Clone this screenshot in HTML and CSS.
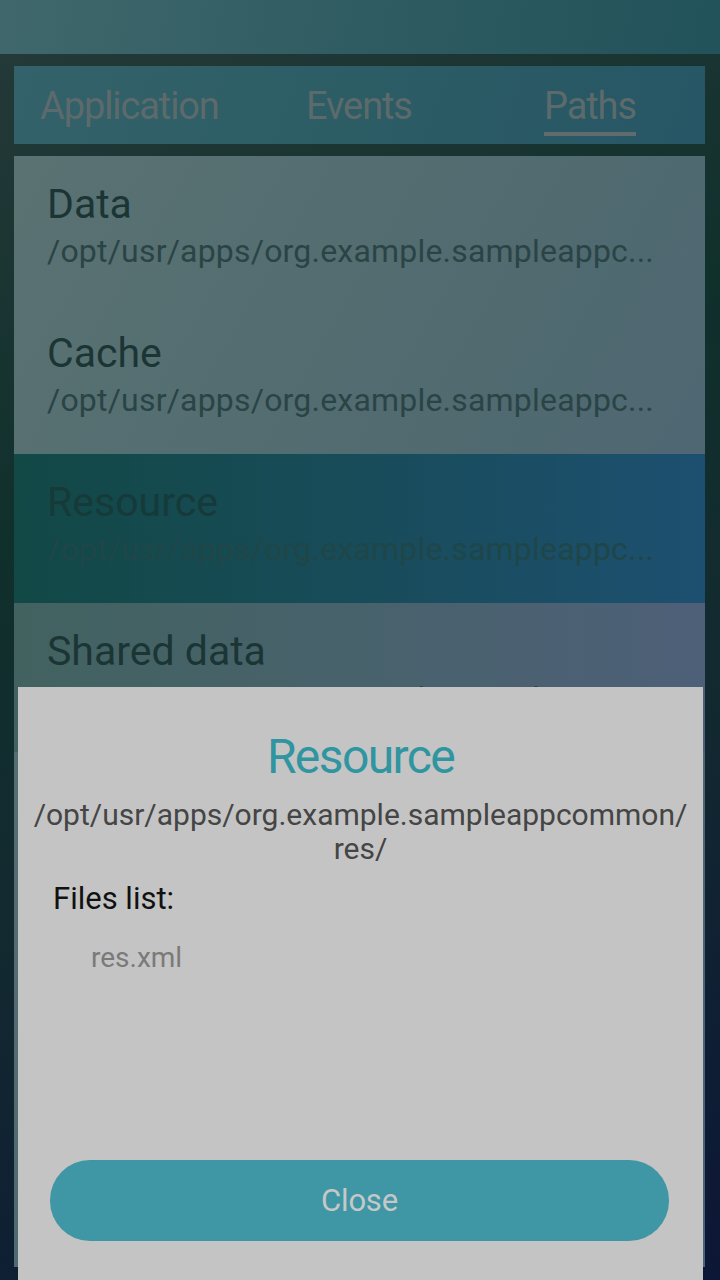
FILE: index.html
```html
<!DOCTYPE html>
<html>
<head>
<meta charset="utf-8">
<link rel="stylesheet" href="styles.css">
</head>
<body>
<div class="screen">
  <header class="topbar"></header>
  <main class="main">
    <nav class="tabs">
      <span class="tab">Application</span>
      <span class="tab">Events</span>
      <span class="tab active">Paths</span>
    </nav>
    <section class="list">
      <div class="row">
        <div class="row-title">Data</div>
        <div class="row-sub">/opt/usr/apps/org.example.sampleappc...</div>
      </div>
      <div class="row">
        <div class="row-title">Cache</div>
        <div class="row-sub">/opt/usr/apps/org.example.sampleappc...</div>
      </div>
      <div class="row selected">
        <div class="row-title">Resource</div>
        <div class="row-sub">/opt/usr/apps/org.example.sampleappc...</div>
      </div>
      <div class="row">
        <div class="row-title">Shared data</div>
        <div class="row-sub">/opt/usr/apps/org.example.sampleappc...</div>
      </div>
    </section>
  </main>
  <div class="popup">
    <h1 class="popup-title">Resource</h1>
    <p class="popup-path">/opt/usr/apps/org.example.sampleappcommon/<br>res/</p>
    <div class="files-label">Files list:</div>
    <ul class="files">
      <li>res.xml</li>
    </ul>
    <div class="spacer"></div>
    <button class="close-btn">Close</button>
  </div>
</div>
</body>
</html>
```
FILE: styles.css
```css
* { box-sizing: border-box; }
html, body { margin: 0; padding: 0; }
body {
  width: 720px;
  height: 1280px;
  overflow: hidden;
  font-family: Roboto, "Noto Sans", sans-serif;
}
.screen {
  position: relative;
  width: 720px;
  height: 1280px;
  display: flex;
  flex-direction: column;
  background: linear-gradient(160deg, #263a3a 0%, #10302c 35%, #132a30 60%, #0c1636 100%);
}
.topbar {
  height: 54px;
  flex: none;
  background: linear-gradient(100deg, #40686c 0%, #2f5c62 50%, #22525a 100%);
}
.main {
  flex: 1;
  display: flex;
  flex-direction: column;
  gap: 12px;
  padding: 12px 15px 13px 14px;
}
.tabs {
  height: 78px;
  flex: none;
  display: flex;
  align-items: flex-start;
  background: linear-gradient(110deg, #33626a 0%, #2c5c64 50%, #275666 100%);
  padding-left: 26px;
}
.tab {
  font-size: 38px;
  letter-spacing: -1.1px;
  color: #5d6a6b;
  line-height: 1;
  padding-top: 21px;
  padding-bottom: 7px;
  border-bottom: 4px solid transparent;
}
.tab:nth-child(1) { width: 266px; }
.tab:nth-child(2) { width: 238px; }
.tab.active { border-bottom-color: #5f6b6c; }
.list {
  flex: 1;
  display: flex;
  flex-direction: column;
  background: linear-gradient(120deg, #5a7272 0%, #506a70 45%, #4c6278 100%);
  overflow: hidden;
}
.row {
  height: 149px;
  flex: none;
  padding: 25px 33px 0 33px;
}
.row.selected {
  background: linear-gradient(90deg, #124846 0%, #184c5a 50%, #1d5070 100%);
}
.row:last-child {
  background: linear-gradient(90deg, #426260 0%, #48626c 50%, #4e6078 100%);
}
.row-title {
  font-size: 41px;
  letter-spacing: 0;
  line-height: 46px;
  color: #1b3535;
}
.row-sub {
  font-size: 32px;
  letter-spacing: 0.2px;
  line-height: 48px;
  color: #2a4446;
  white-space: nowrap;
}
.row.selected .row-title { color: #163a3a; }
.row.selected .row-sub { color: #1f4648; }
.popup {
  position: absolute;
  left: 18px;
  right: 17px;
  top: 687px;
  bottom: 0;
  background: #c4c4c4;
  display: flex;
  flex-direction: column;
  padding: 42px 0 39px 0;
}
.popup-title {
  margin: 0;
  text-align: center;
  font-weight: 400;
  font-size: 48px;
  letter-spacing: -1.6px;
  line-height: 56px;
  color: #2f95a0;
}
.popup-path {
  margin: 13px 0 0 0;
  text-align: center;
  font-size: 30px;
  letter-spacing: 0;
  line-height: 34px;
  color: #454545;
}
.files-label {
  margin: 13px 0 0 35px;
  font-size: 31px;
  letter-spacing: 0;
  line-height: 40px;
  color: #111;
}
.files {
  list-style: none;
  margin: 21px 0 0 73px;
  padding: 0;
}
.files li {
  font-size: 28px;
  letter-spacing: 0;
  line-height: 36px;
  color: #7a7a7a;
}
.spacer { flex: 1; }
.close-btn {
  align-self: center;
  width: 619px;
  height: 81px;
  margin-left: -2px;
  border: none;
  border-radius: 40px;
  background: #3f96a5;
  color: #c6c8c8;
  font-family: Roboto, "Noto Sans", sans-serif;
  font-size: 31px;
  letter-spacing: -0.2px;
}
```
